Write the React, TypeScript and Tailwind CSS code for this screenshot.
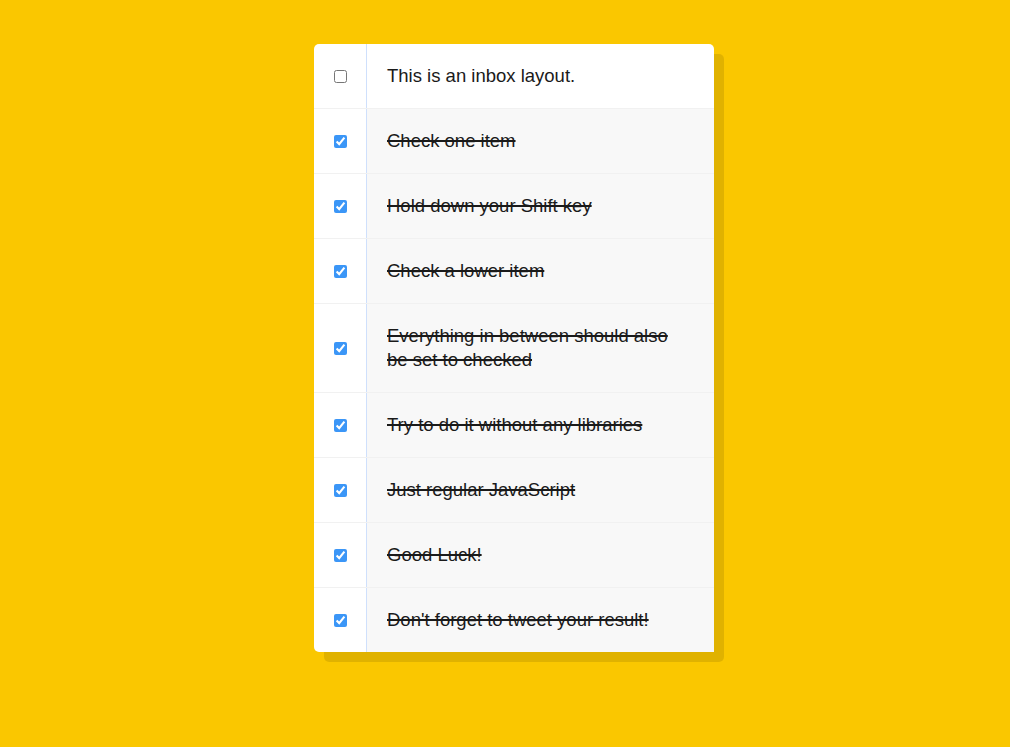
const items = [
  { text: 'This is an inbox layout.', checked: false },
  { text: 'Check one item', checked: true },
  { text: 'Hold down your Shift key', checked: true },
  { text: 'Check a lower item', checked: true },
  { text: 'Everything in between should also be set to checked', checked: true },
  { text: 'Try to do it without any libraries', checked: true },
  { text: 'Just regular JavaScript', checked: true },
  { text: 'Good Luck!', checked: true },
  { text: "Don't forget to tweet your result!", checked: true },
];

export default function App() {
  return (
    <div className="flex min-h-[747px] justify-center bg-[#fac700] pt-[44px] pb-10 pl-[18px] font-['Liberation_Sans',Arial,sans-serif]">
      <div className="h-fit w-[400px] rounded-[5px] bg-white shadow-[10px_10px_0_rgba(0,0,0,0.1)]">
        {items.map((item, i) => (
          <div
            key={i}
            className={`flex items-center ${i < items.length - 1 ? 'border-b border-[#f1f1f1]' : ''}`}
          >
            <input
              type="checkbox"
              defaultChecked={item.checked}
              className="my-5 ml-5 mr-[19px] h-[13px] w-[13px] shrink-0 accent-[#3b96f7]"
            />
            <p
              className={`flex-1 self-stretch border-l border-l-[#cfe0fc] py-5 pl-5 pr-7 text-[18.5px] leading-6 text-[#1a1a1a] ${
                item.checked ? 'bg-[#f8f8f8] line-through decoration-[1.5px]' : ''
              } ${i === 0 ? 'rounded-tr-[5px]' : ''}`}
            >
              {item.text}
            </p>
          </div>
        ))}
      </div>
    </div>
  );
}
